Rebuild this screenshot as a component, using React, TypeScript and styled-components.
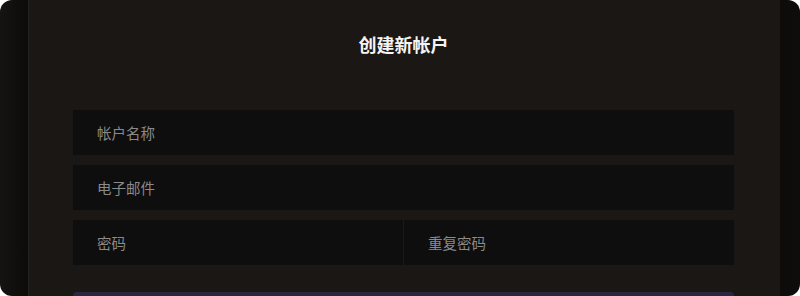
import * as React from 'react'
import styled, { createGlobalStyle } from 'styled-components'

const Global = createGlobalStyle`
  html, body {
    margin: 0;
    padding: 0;
    background: #ffffff;
  }
  body {
    font-family: "Noto Sans", "Noto Sans CJK SC", sans-serif;
  }
`

const Frame = styled('div')`
  width: 800px;
  height: 296px;
  border-radius: 12px;
  overflow: hidden;
  background: linear-gradient(90deg, #161412 0px, #0c0b0a 28px, #0c0b0a 772px, #0e0d0c 800px);
  display: flex;
  padding-left: 28px;
  box-sizing: border-box;
`

const Panel = styled('section')`
  width: 752px;
  box-sizing: border-box;
  background: #1a1714;
  border-left: 1px solid #23201d;
  padding: 30px 46px 0 44px;
  display: flex;
  flex-flow: column;
`

const Title = styled('h1')`
  margin: 0 0 52px;
  text-align: center;
  font-family: "Noto Sans CJK SC", sans-serif;
  font-size: 18px;
  font-weight: 700;
  line-height: 28px;
  color: #f5f4f2;
`

const Form = styled('form')`
  display: flex;
  flex-flow: column;
  gap: 10px;
`

const Row = styled('div')`
  display: flex;
  gap: 1px;
  background: #1c1a18;
`

const Field = styled('input')`
  flex: 1 1 0;
  min-width: 0;
  height: 45px;
  box-sizing: border-box;
  border: none;
  outline: none;
  background: #0e0e0e;
  padding: 0 24px;
  font-family: "Noto Sans CJK SC", sans-serif;
  font-size: 14.5px;
  color: #d0d0d0;
  &::placeholder {
    color: #8a8a8a;
  }
`

const Submit = styled('button')`
  margin-top: 17px;
  flex: 0 0 auto;
  height: 45px;
  border: none;
  border-radius: 4px;
  background: #2c2540;
  color: #f2f0ee;
  font-family: "Noto Sans CJK SC", sans-serif;
  font-size: 15px;
`

export default function App() {
  return (
    <>
      <Global />
      <Frame>
        <Panel>
          <Title>创建新帐户</Title>
          <Form onSubmit={e => e.preventDefault()}>
            <Row>
              <Field placeholder="帐户名称" />
            </Row>
            <Row>
              <Field placeholder="电子邮件" type="email" />
            </Row>
            <Row>
              <Field placeholder="密码" type="password" />
              <Field placeholder="重复密码" type="password" />
            </Row>
            <Submit type="submit">注册</Submit>
          </Form>
        </Panel>
      </Frame>
    </>
  )
}
